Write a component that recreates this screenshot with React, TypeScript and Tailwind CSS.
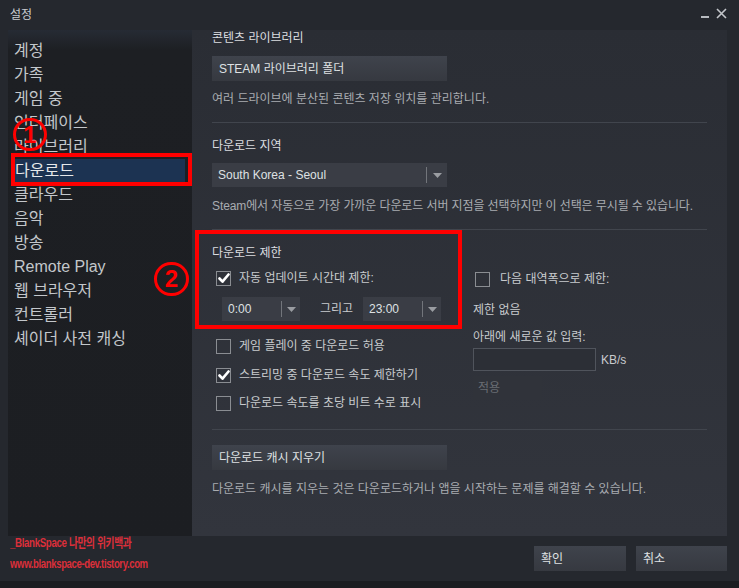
const FONT = { fontFamily: '"Liberation Sans", "Noto Sans CJK KR", sans-serif' };

function CheckBox({ checked }: { checked?: boolean }) {
  return (
    <div className="w-[15px] h-[15px] border border-[#8a8d92] flex items-center justify-center shrink-0">
      {checked && (
        <svg width="12" height="11" viewBox="0 0 12 11" fill="none">
          <path d="M1.5 5.5l3 3.2L10.5 1.5" stroke="#ffffff" strokeWidth="2.6" strokeLinecap="round" strokeLinejoin="round" />
        </svg>
      )}
    </div>
  );
}

function CheckRow({ checked, label }: { checked?: boolean; label: string }) {
  return (
    <div className="flex items-center h-[16px] pl-[4px] gap-[8px]">
      <CheckBox checked={checked} />
      <span className="text-[12px] text-[#c8cbce]">{label}</span>
    </div>
  );
}

function Arrow() {
  return (
    <svg width="9" height="5" viewBox="0 0 9 5">
      <path d="M0 0h9L4.5 5z" fill="#9a9da2" />
    </svg>
  );
}

function Dropdown({ value, w, sep }: { value: string; w: string; sep: string }) {
  return (
    <div className={`h-[24px] ${w} bg-[#3a3d45] flex items-center`}>
      <span className={`${sep} pl-[6px] text-[12px] text-[#dfe1e3]`}>{value}</span>
      <div className="w-px h-[16px] bg-[#72757b]" />
      <div className="flex-1 flex justify-center">
        <Arrow />
      </div>
    </div>
  );
}

function Button({ label, w }: { label: string; w: string }) {
  return (
    <div className={`h-[25px] ${w} bg-gradient-to-b from-[#3f434c] to-[#363940] flex items-center pl-[7px] text-[12px] text-[#dfe1e3]`}>
      {label}
    </div>
  );
}

const menu = ["계정", "가족", "게임 중", "인터페이스", "라이브러리", "다운로드", "클라우드", "음악", "방송", "Remote Play", "웹 브라우저", "컨트롤러", "셰이더 사전 캐싱"];

export default function App() {
  return (
    <div className="w-[739px] h-[588px] bg-[#1b1d21] overflow-hidden" style={FONT}>
      <div className="relative h-[581px] bg-[#25282e] flex flex-col">
        {/* title bar */}
        <div className="h-[30px] flex items-center justify-between pl-[10px] pr-[12px]">
          <span className="text-[12px] text-[#c9ccd0]">설정</span>
          <div className="flex items-end gap-[7px] pb-[4px]">
            <div className="w-[8px] h-[2px] bg-[#b8bbc0] mb-[1px]" />
            <svg width="11" height="11" viewBox="0 0 11 11">
              <path d="M1 1l9 9M10 1l-9 9" stroke="#c3c6ca" strokeWidth="1.6" />
            </svg>
          </div>
        </div>

        <div className="flex h-[506px]">
          {/* sidebar */}
          <div className="ml-[8px] w-[184px] bg-gradient-to-b from-[#262b34] via-[#1d1f23] via-[4%] to-[#1c1e22] pt-[9px]">
            {menu.map((m) =>
              m === "다운로드" ? (
                <div key={m} className="h-[24px] mx-[7px] flex items-center text-[16px] bg-[#1c3352] text-[#e6e8ea]">
                  {m}
                </div>
              ) : (
                <div key={m} className="h-[24px] flex items-center pl-[6px] text-[16px] text-[#c3c7cb]">
                  {m}
                </div>
              )
            )}
          </div>

          {/* content panel */}
          <div className="w-[535px] bg-gradient-to-b from-[#2a2d34] to-[#32353d] pl-[20px] pr-[20px]">
            <div className="h-[16px] leading-[16px] text-[12px] text-[#dcdee0]">콘텐츠 라이브러리</div>
            <div className="mt-[10px]">
              <Button label="STEAM 라이브러리 폴더" w="w-[235px]" />
            </div>
            <div className="mt-[10px] h-[16px] leading-[16px] text-[12px] text-[#a9acb1]">
              여러 드라이브에 분산된 콘텐츠 저장 위치를 관리합니다.
            </div>
            <div className="mt-[15px] h-px bg-[#41454d]" />

            <div className="mt-[15px] h-[16px] leading-[16px] text-[12px] text-[#dcdee0]">다운로드 지역</div>
            <div className="mt-[9px]">
              <Dropdown value="South Korea - Seoul" w="w-[235px]" sep="w-[214px]" />
            </div>
            <div className="mt-[11px] h-[16px] leading-[16px] text-[12px] text-[#a9acb1] whitespace-nowrap tracking-[-0.1px]">
              Steam에서 자동으로 가장 가까운 다운로드 서버 지점을 선택하지만 이 선택은 무시될 수 있습니다.
            </div>
            <div className="mt-[15px] h-px bg-[#41454d]" />

            <div className="mt-[15px] h-[16px] leading-[16px] text-[12px] text-[#dcdee0]">다운로드 제한</div>
            <div className="flex">
              <div className="w-[261px]">
                <div className="mt-[9px]">
                  <CheckRow checked label="자동 업데이트 시간대 제한:" />
                </div>
                <div className="mt-[11px] ml-[10px] flex items-center">
                  <Dropdown value="0:00" w="w-[78px]" sep="w-[59px]" />
                  <span className="ml-[20px] w-[43px] text-[12px] text-[#c8cbce]">그리고</span>
                  <Dropdown value="23:00" w="w-[78px]" sep="w-[59px]" />
                </div>
                <div className="mt-[17px]">
                  <CheckRow label="게임 플레이 중 다운로드 허용" />
                </div>
                <div className="mt-[13px]">
                  <CheckRow checked label="스트리밍 중 다운로드 속도 제한하기" />
                </div>
                <div className="mt-[12px]">
                  <CheckRow label="다운로드 속도를 초당 비트 수로 표시" />
                </div>
              </div>
              <div className="flex-1">
                <div className="mt-[10px] flex items-center h-[16px] pl-[2px] gap-[10px]">
                  <CheckBox />
                  <span className="text-[12px] text-[#c8cbce]">다음 대역폭으로 제한:</span>
                </div>
                <div className="mt-[15px] h-[16px] leading-[16px] text-[12px] text-[#c8cbce]">제한 없음</div>
                <div className="mt-[11px] h-[16px] leading-[16px] text-[12px] text-[#c8cbce]">아래에 새로운 값 입력:</div>
                <div className="mt-[3px] flex items-center gap-[5px]">
                  <div className="w-[123px] h-[23px] border border-[#50545c] bg-[#2c2f36]" />
                  <span className="text-[12px] text-[#c8cbce]">KB/s</span>
                </div>
                <div className="mt-[5px] w-[69px] h-[24px] bg-[#30333a] flex items-center pl-[5px] text-[12px] text-[#696d73]">
                  적용
                </div>
              </div>
            </div>
            <div className="mt-[18px] h-px bg-[#41454d]" />
            <div className="mt-[15px]">
              <Button label="다운로드 캐시 지우기" w="w-[235px]" />
            </div>
            <div className="mt-[11px] h-[16px] leading-[16px] text-[12px] text-[#a9acb1]">
              다운로드 캐시를 지우는 것은 다운로드하거나 앱을 시작하는 문제를 해결할 수 있습니다.
            </div>
          </div>
        </div>

        {/* footer */}
        <div className="flex-1 flex justify-between pr-[12px]">
          <div className="pl-[10px] font-bold text-[#dc2f3a] whitespace-nowrap">
            <div className="h-[14px] leading-[14px] text-[13px] tracking-[-0.5px] origin-left scale-x-[0.75]">_BlankSpace 나만의 위키백과</div>
            <div className="mt-[7px] h-[14px] leading-[14px] text-[12px] tracking-[-0.5px] origin-left scale-x-[0.8]">www.blankspace-dev.tistory.com</div>
          </div>
          <div className="flex gap-[10px] mt-[10px]">
            <Button label="확인" w="w-[92px]" />
            <Button label="취소" w="w-[91px]" />
          </div>
        </div>

        {/* annotations */}
        <div className="absolute left-[11px] top-[153px] w-[181px] h-[33px] border-[4px] border-[#ff0000]" />
        <div className="absolute left-[195px] top-[230px] w-[267px] h-[99px] border-[4px] border-[#ff0000]" />
        <div className="absolute left-[13px] top-[118px] w-[34px] h-[33px] rounded-full border-[3px] border-[#ff0000] flex items-center justify-center text-[#ff0000] text-[24px] font-bold leading-none">
          1
        </div>
        <div className="absolute left-[154px] top-[262px] w-[35px] h-[34px] rounded-full border-[3px] border-[#ff0000] flex items-center justify-center text-[#ff0000] text-[24px] font-bold leading-none">
          2
        </div>
      </div>
    </div>
  );
}
